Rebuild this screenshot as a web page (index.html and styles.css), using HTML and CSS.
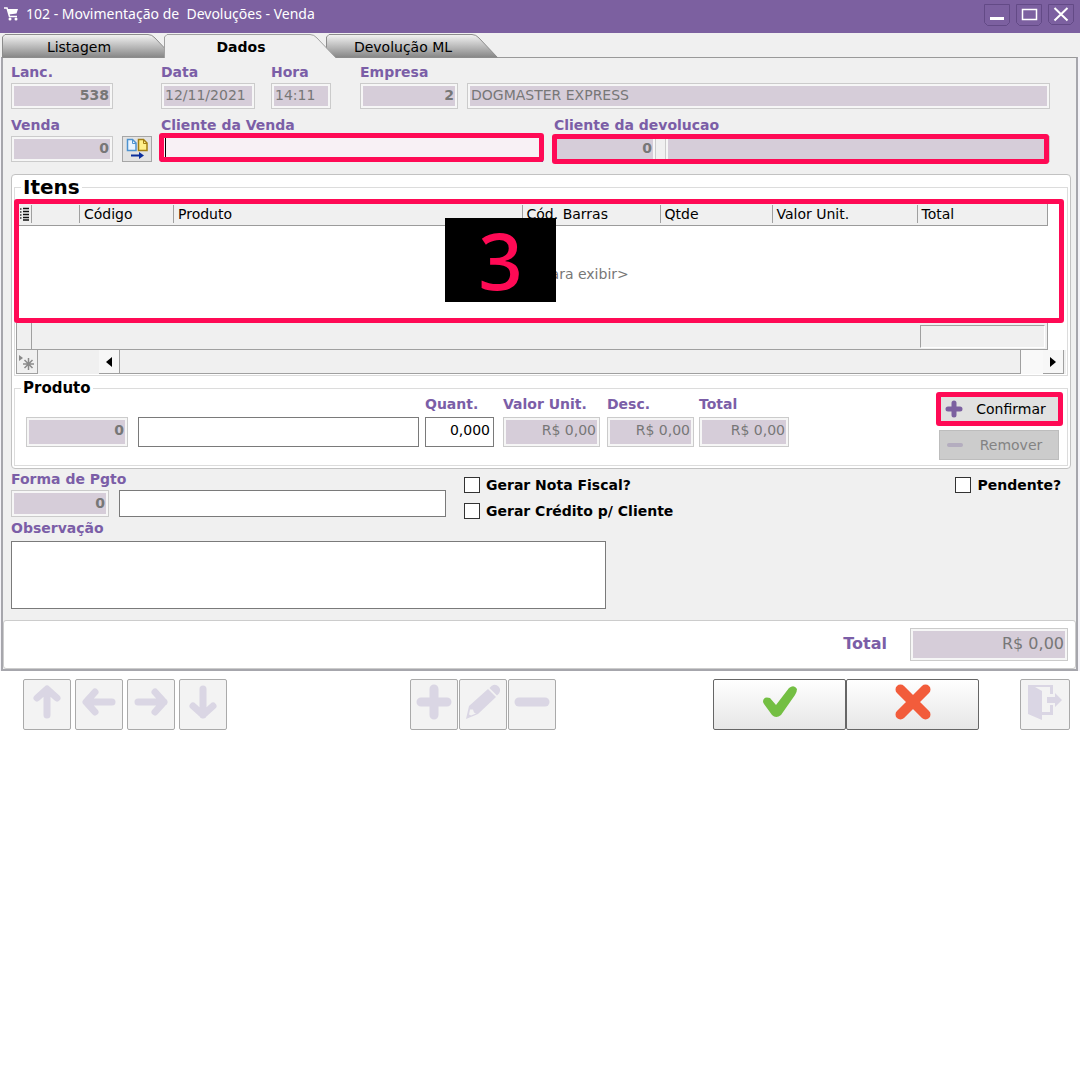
FILE: index.html
```html
<!DOCTYPE html>
<html lang="pt-BR">
<head>
<meta charset="utf-8">
<title>102 - Movimentação de Devoluções - Venda</title>
<link rel="stylesheet" href="styles.css">
</head>
<body>
<header class="titlebar">
  <svg class="cart" width="15" height="14" viewBox="0 0 15 14" aria-hidden="true"><path d="M0 1h3l2.500 8.500h7.500" fill="none" stroke="#fff" stroke-width="1.500"/><path d="M3.500 2H14l-1.500 4.500L5 7.500z" fill="#fff"/><circle cx="6" cy="12" r="1.500" fill="#fff"/><circle cx="12" cy="12" r="1.500" fill="#fff"/></svg>
  <h1 class="title">102 - Movimentação de&nbsp; Devoluções - Venda</h1>
  <div class="window-buttons">
    <button class="window-button" type="button" aria-label="Minimizar"><svg width="26" height="22" viewBox="0 0 26 22"><path d="M.5.500h25v18l-3 3h-19l-3-3z" fill="none" stroke="#634a86"/><path d="M6 14.500h14" stroke="#fff" stroke-width="3"/></svg></button>
    <button class="window-button" type="button" aria-label="Maximizar"><svg width="26" height="22" viewBox="0 0 26 22"><path d="M.5.500h25v18l-3 3h-19l-3-3z" fill="none" stroke="#634a86"/><path d="M6.500 5.500h14v10h-14z" fill="none" stroke="#fff" stroke-width="1.500"/></svg></button>
    <button class="window-button" type="button" aria-label="Fechar"><svg width="26" height="22" viewBox="0 0 26 22"><path d="M.5.500h25v17l-3 3h-19l-3-3z" fill="none" stroke="#634a86"/><path d="M6.500 4l13 12.500M19.500 4l-13 12.500" stroke="#fff" stroke-width="2"/></svg></button>
  </div>
</header>

<nav class="tabs">
  <svg width="0" height="0" class="defs" aria-hidden="true"><defs><linearGradient id="metal" x1="0" y1="0" x2="0" y2="1"><stop offset="0" stop-color="#f4f4f4"/><stop offset="1" stop-color="#868686"/></linearGradient></defs></svg>
  <button class="tab" type="button"><svg class="tab-shape" viewBox="0 0 172 24" aria-hidden="true"><path d="M.5 23.500V3L3 .5H146Q150 .5 153 4L171.500 23.500z" fill="url(#metal)" stroke="#8c8c8c"/></svg><span class="tab-text">Listagem</span></button>
  <button class="tab tab-active" type="button"><svg class="tab-shape" viewBox="0 0 172 24" aria-hidden="true"><path d="M.5 24V3L3 .5H146Q150 .5 153 4L172 24" fill="#f0f0f0" stroke="#a0a0a0"/></svg><span class="tab-text">Dados</span></button>
  <button class="tab" type="button"><svg class="tab-shape" viewBox="0 0 172 24" aria-hidden="true"><path d="M.5 23.500V3L3 .5H146Q150 .5 153 4L171.500 23.500z" fill="url(#metal)" stroke="#8c8c8c"/></svg><span class="tab-text">Devolução ML</span></button>
</nav>

<main class="window">
<form class="panel">
  <div class="fields">
    <div class="row">
      <div class="field w-code"><label for="lanc">Lanc.</label><input id="lanc" class="locked num" value="538" readonly></div>
      <div class="field w-date"><label for="data">Data</label><input id="data" class="locked" value="12/11/2021" readonly></div>
      <div class="field w-time"><label for="hora">Hora</label><input id="hora" class="locked" value="14:11" readonly></div>
      <div class="field w-company"><label for="empresa">Empresa</label><input id="empresa" class="locked num" value="2" readonly></div>
      <div class="field w-fill"><input class="locked" aria-label="Nome da empresa" value="DOGMASTER EXPRESS" readonly></div>
    </div>
    <div class="row">
      <div class="field w-code"><label for="venda">Venda</label><input id="venda" class="locked num" value="0" readonly></div>
      <button class="copy-button" type="button" aria-label="Copiar venda"><svg width="24" height="22" viewBox="0 0 24 22"><path d="M2.500 1.500h5l3.500 3.500v7.500h-8.500z" fill="#eaf5ff" stroke="#4d92cf" stroke-width="1.500"/><path d="M7.500 2v3.500h3.500" fill="none" stroke="#4d92cf"/><path d="M13.500 1.500h5l3.500 3.500v7.500h-8.500z" fill="#fff08a" stroke="#a27f13" stroke-width="1.500"/><path d="M18.500 2v3.500h3.500" fill="none" stroke="#a27f13"/><path d="M6 17.500h10" stroke="#0b2f9c" stroke-width="2"/><path d="M14 14l5 3.500-5 3.500z" fill="#0b2f9c"/></svg></button>
      <div class="field w-client"><label for="cliente">Cliente da Venda</label><div class="marked marked-client"><input id="cliente" class="focused"></div></div>
      <div class="field w-return"><label for="devolucao">Cliente da devolucao</label><div class="marked marked-return pair"><input id="devolucao" class="locked num w-code" value="0" readonly><input class="locked w-fill" aria-label="Nome do cliente da devolucao" readonly></div></div>
    </div>
  </div>

  <div class="card">
    <fieldset class="group">
      <legend class="legend-large">Itens</legend>
      <div class="marked marked-grid grid-view">
        <table class="grid">
          <colgroup><col class="c-mark"><col class="c-blank"><col class="c-code"><col><col class="c-bar"><col class="c-qty"><col class="c-unit"><col class="c-total"></colgroup>
          <thead><tr>
            <th aria-label="Colunas"><svg width="10" height="14" viewBox="0 0 10 14"><path d="M0 2h1.500M0 5h1.500M0 8h1.500M0 11h1.500" stroke="#333" stroke-width="1.500"/><path d="M3 1.500h6M3 4.500h6M3 7.500h6M3 10.500h6M3 13h6" stroke="#111" stroke-width="1.500"/></svg></th>
            <th></th><th>Código</th><th>Produto</th><th>Cód. Barras</th><th>Qtde</th><th>Valor Unit.</th><th>Total</th>
          </tr></thead>
          <tbody><tr><td class="empty" colspan="8">&lt;Sem dados para exibir&gt;</td></tr></tbody>
        </table>
        <div class="badge">3</div>
      </div>
      <div class="summary"><div class="summary-total"></div></div>
      <div class="scroller">
        <button class="filter-button" type="button" aria-label="Novo registro"><svg width="18" height="16" viewBox="0 0 18 16"><path d="M1 1l4 3-4 3z" fill="#8a8a8a"/><path d="M10.500 4v12M5 10h11M6.500 6l8 8M14.500 6l-8 8" stroke="#8a8a8a" stroke-width="1.500"/></svg></button>
        <button class="scroll-arrow push" type="button" aria-label="Rolar para a esquerda"><svg width="6" height="10" viewBox="0 0 6 10"><path d="M6 0v10L0 5z"/></svg></button>
        <div class="thumb"></div>
        <div class="track"></div>
        <button class="scroll-arrow" type="button" aria-label="Rolar para a direita"><svg width="6" height="10" viewBox="0 0 6 10"><path d="M0 0v10l6-5z"/></svg></button>
      </div>
    </fieldset>

    <fieldset class="group">
      <legend class="legend-small">Produto</legend>
      <div class="product">
        <input class="locked num tall w-code" aria-label="Código do produto" value="0" readonly>
        <input class="plain tall w-name" aria-label="Produto">
        <div class="field w-quant"><label for="quant">Quant.</label><input id="quant" class="plain tall right" value="0,000"></div>
        <div class="field w-unit"><label for="unit">Valor Unit.</label><input id="unit" class="locked tall right" value="R$ 0,00" readonly></div>
        <div class="field w-desc"><label for="desc">Desc.</label><input id="desc" class="locked tall right" value="R$ 0,00" readonly></div>
        <div class="field w-sum"><label for="sum">Total</label><input id="sum" class="locked tall right" value="R$ 0,00" readonly></div>
        <div class="actions">
          <div class="marked marked-button"><button class="action" type="button"><svg width="18" height="18" viewBox="0 0 18 18"><path d="M9 3v12M3 9h12" stroke="#7c60a0" stroke-width="5" stroke-linecap="round"/></svg><span>Confirmar</span></button></div>
          <button class="action action-off" type="button" disabled><svg width="18" height="18" viewBox="0 0 18 18"><path d="M3 9h12" stroke="#b4adbf" stroke-width="4" stroke-linecap="round"/></svg><span>Remover</span></button>
        </div>
      </div>
    </fieldset>
  </div>

  <div class="payment">
    <div class="field"><label for="forma">Forma de Pgto</label><div class="pair"><input id="forma" class="locked num w-company" value="0" readonly><input class="plain w-payment" aria-label="Nome da forma de pagamento"></div></div>
    <div class="checks">
      <label class="check"><input type="checkbox">Gerar Nota Fiscal?</label>
      <label class="check"><input type="checkbox">Gerar Crédito p/ Cliente</label>
    </div>
    <label class="check check-end"><input type="checkbox">Pendente?</label>
  </div>

  <div class="field notes"><label for="obs">Observação</label><textarea id="obs"></textarea></div>

  <div class="totals"><label for="total">Total</label><input id="total" class="locked right" value="R$ 0,00" readonly></div>
</form>
</main>

<footer class="toolbar">
  <div class="tools">
    <button class="tool" type="button" disabled aria-label="Primeiro"><svg width="36" height="36" viewBox="0 0 36 36"><path d="M18 31V6M8 14L18 5l10 9"/></svg></button>
    <button class="tool" type="button" disabled aria-label="Anterior"><svg width="36" height="36" viewBox="0 0 36 36"><path d="M31 18H6M14 8L5 18l9 10"/></svg></button>
    <button class="tool" type="button" disabled aria-label="Próximo"><svg width="36" height="36" viewBox="0 0 36 36"><path d="M5 18h26M22 8l9 10-9 10"/></svg></button>
    <button class="tool" type="button" disabled aria-label="Último"><svg width="36" height="36" viewBox="0 0 36 36"><path d="M18 5v26M8 22l10 9 10-9"/></svg></button>
  </div>
  <div class="tools tools-edit">
    <button class="tool" type="button" disabled aria-label="Incluir"><svg width="36" height="36" viewBox="0 0 36 36"><path class="thick" d="M18 5v26M5 18h26"/></svg></button>
    <button class="tool" type="button" disabled aria-label="Editar"><svg width="36" height="36" viewBox="0 0 36 36"><path class="solid" fill-rule="evenodd" d="M1 35l3-13L23 5l8 8-18 17zM5 25.500l-1 5 2 1 5-2-2-1-1-3zM24.500 4l2-2q4-2.500 7 .5t.5 7l-2 2z"/></svg></button>
    <button class="tool" type="button" disabled aria-label="Excluir"><svg width="36" height="36" viewBox="0 0 36 36"><path class="thick" d="M5 18h26"/></svg></button>
  </div>
  <div class="tools tools-save">
    <button class="tool tool-wide" type="button" aria-label="Gravar"><svg width="36" height="36" viewBox="0 0 36 36"><path d="M1 18q0-6 7-4l6 7L27 4q5-4 8 1 0 3-2 6L19 31q-5 4-9 0L2 20z" fill="#74bf43"/></svg></button>
    <button class="tool tool-wide" type="button" aria-label="Cancelar"><svg width="36" height="36" viewBox="0 0 36 36"><path d="M5.500 5.500l25 25M30.500 5.500l-25 25" stroke="#f25c3b" stroke-width="10" stroke-linecap="round"/></svg></button>
  </div>
  <button class="tool tool-exit" type="button" disabled aria-label="Sair"><svg width="36" height="36" viewBox="0 0 36 36"><path class="solid" d="M1 1h25v9h-3V3H8l7 4v21h8v-7h3v10H15v5L1 30zM20 13h8V9l7 7-7 7v-4h-8z"/></svg></button>
</footer>
</body>
</html>
```
FILE: styles.css
```css
* { box-sizing: border-box; }

body {
  margin: 0;
  background: #fff;
  color: #000;
  font: 14px/16px "DejaVu Sans", Verdana, sans-serif;
}

button, input, textarea {
  margin: 0;
  padding: 0;
  border: 0;
  border-radius: 0;
  color: inherit;
  font: inherit;
}

svg { display: block; flex: none; }
.defs { position: absolute; }

/* Title bar */
.titlebar {
  display: flex;
  align-items: flex-start;
  height: 33px;
  padding: 4px 6px 0 4px;
  background: #7c60a0;
  color: #fff;
}
.cart { margin-top: 3px; }
.title {
  flex: 1;
  margin: 0 0 0 7px;
  font: 14px/20px "Noto Sans", "Open Sans", sans-serif;
}
.window-buttons { display: flex; gap: 6px; }
.window-button { background: none; }

/* Tabs */
.tabs {
  display: flex;
  height: 25px;
  padding: 1px 0 0 2px;
  background: #f0f0f0;
}
.tab {
  position: relative;
  width: 172px;
  height: 24px;
  padding-top: 1px;
  background: none;
}
.tab + .tab { margin-left: -10px; }
.tab-active { z-index: 1; font-weight: bold; }
.tab-shape { position: absolute; inset: 0; width: 100%; height: 100%; }
.tab-text { position: relative; padding-right: 18px; }

/* Panel */
.window { padding: 0 2px 0 1px; background: #f4f3f8; }
.panel {
  margin-top: -1px;
  border: 2px solid #a6a6ac;
  border-top: 1px solid #999;
  background: #f0f0f0;
}
.fields { padding: 6px 26px 0 8px; }
.row { display: flex; align-items: flex-end; margin-bottom: 8px; }
.field { display: flex; flex-direction: column; gap: 3px; }
.field > label, .totals label { color: #7b5ea7; font-weight: bold; white-space: nowrap; }
.pair { display: flex; }

.locked, .plain, .focused { height: 26px; min-width: 0; width: 100%; }
.locked {
  padding: 0 3px 2px;
  border: 1px solid #cbcbcb;
  background: #d6cdd9;
  box-shadow: inset 0 0 0 2px #f6f6f6;
  color: #777;
}
.num { padding: 0 3px 2px; text-align: right; font-weight: bold; }
.right { text-align: right; }
.plain { padding: 0 3px; border: 1px solid #7a7a7a; background: #fff; }
.focused { padding-left: 4px; border: 1px solid #0a64c8; background: #f8f1f5; box-shadow: inset 3px 0 0 #f8f1f5, inset 4px 0 0 #000; }
.tall { height: 30px; padding-bottom: 5px; }

.w-code { flex: none; width: 102px; }
.w-date { width: 94px; margin-left: 48px; }
.w-time { width: 60px; margin-left: 16px; }
.w-company { flex: none; width: 98px; }
.field.w-company { margin-left: 29px; }
.w-fill { flex: 1; margin-left: 9px; }
.w-client { flex: 382 1 0; margin-left: 9px; }
.w-return { flex: 496 1 0; margin-left: 11px; min-width: 0; }

.copy-button {
  display: flex;
  justify-content: center;
  width: 30px;
  height: 26px;
  margin-left: 9px;
  padding-top: 1px;
  border: 1px solid #a6a6a6;
  background: #e3e3e3;
}

/* Highlight frames */
.marked { position: relative; }
.marked::after {
  content: "";
  position: absolute;
  inset: -2px;
  border: 5px solid #ff0a55;
  border-radius: 3px;
  pointer-events: none;
}
.marked-client::after { inset: -3px -1px 0 -2px; }
.marked-return::after { inset: -2px 1px -2px -2px; }
.marked-grid::after { inset: 0 2px 0 -2px; }
.marked-button::after { inset: -3px -4px -3px -3px; }

/* Items card */
.card {
  margin: 12px 5px 0 8px;
  padding: 0 2px 2px;
  border: 1px solid #c2c2c2;
  border-radius: 4px;
  background: #fff;
}
.group {
  min-width: 0;
  margin: 0;
  padding: 0 1px 1px;
  border: 1px solid #dcdcdc;
}
.group legend { margin-left: 5px; padding: 0 2px; font-weight: bold; }
.legend-large { font-size: 20px; line-height: 24px; }
.legend-small { font-size: 15px; line-height: 24px; }

.grid-view { padding: 4px 18px 0 1px; }
.grid { width: 100%; border-collapse: collapse; table-layout: fixed; }
.grid th {
  height: 22px;
  padding: 0 4px;
  border-bottom: 1px solid #9b9b9b;
  background: linear-gradient(#a0a0a0, #a0a0a0) right 2px / 1px 18px no-repeat #f0f0f0;
  font-weight: normal;
  text-align: left;
  white-space: nowrap;
}
.grid th:first-child { padding: 0 3px; }
.grid th:last-child { border-right: 1px solid #9b9b9b; background: #f0f0f0; }
.c-mark { width: 15px; }
.c-blank { width: 48px; }
.c-code { width: 94px; }
.c-bar { width: 138px; }
.c-qty { width: 112px; }
.c-unit { width: 145px; }
.c-total { width: 130px; }
.grid .empty { height: 98px; padding: 0 0 0 12px; text-align: center; color: #777; }
.badge {
  position: absolute;
  top: 19px;
  left: 429px;
  width: 111px;
  height: 84px;
  background: #000;
  color: #ff0a55;
  font: 500 78px/84px "Noto Sans", "Open Sans", sans-serif;
  text-align: center;
}

.summary {
  display: flex;
  justify-content: flex-end;
  height: 27px;
  margin: 0 18px 0 0;
  padding: 2px 2px 1px 0;
  border: 1px solid #a0a0a0;
  border-top: 0;
  background: linear-gradient(#a0a0a0, #a0a0a0) 14px 0 / 1px 100% no-repeat #f0f0f0;
}
.summary-total { width: 125px; border: 1px solid #a0a0a0; border-right-color: #fff; border-bottom-color: #fff; }

.scroller { display: flex; height: 24px; background: #f0f0f0; }
.filter-button {
  display: flex;
  align-items: center;
  justify-content: center;
  width: 22px;
  border: 1px solid #a0a0a0;
  border-top: 0;
  background: #f0f0f0;
}
.scroll-arrow {
  display: flex;
  align-items: center;
  justify-content: center;
  width: 21px;
  border: 1px solid #a0a0a0;
  border-width: 0 1px 1px 0;
  background: #f7f7f7;
}
.push { margin-left: 61px; }
.thumb { flex: 1; border: 1px solid #a0a0a0; border-width: 0 1px 1px 0; }
.track { width: 22px; background: #f9f9f9; }
.scroller > :last-child { margin-right: 2px; }

/* Product entry */
.product { display: flex; align-items: flex-end; margin-top: -5px; padding: 0 7px 4px 10px; }
.product > input, .product > .field { margin-bottom: 13px; }
.product .field { gap: 5px; }
.w-name { flex: 0 1 281px; margin-left: 10px; }
.w-quant { width: 69px; margin-left: 6px; }
.w-unit { width: 97px; margin-left: 9px; }
.w-desc { width: 87px; margin-left: 7px; }
.w-sum { width: 90px; margin-left: 5px; }
.actions { display: flex; flex-direction: column; gap: 7px; width: 120px; margin-left: auto; }
.action {
  display: flex;
  align-items: center;
  width: 100%;
  height: 28px;
  padding-left: 6px;
  background: #e1e1e1;
}
.action span { flex: 1; text-align: center; }
.action-off { height: 30px; border: 1px solid #bdbdbd; background: #ccc; color: #838383; }

/* Payment and notes */
.payment { display: flex; align-items: flex-start; padding: 2px 15px 0 8px; }
.w-payment { width: 327px; margin-left: 10px; }
.payment .plain, .payment .locked { height: 27px; }
.checks { display: flex; flex-direction: column; gap: 10px; padding: 6px 0 0 18px; }
.check { display: flex; align-items: center; gap: 6px; font-weight: bold; white-space: nowrap; }
.check input {
  appearance: none;
  width: 16px;
  height: 16px;
  border: 1px solid #333;
  background: #fff;
}
.check-end { margin: 6px 0 0 auto; }
.notes { padding: 1px 8px 11px; gap: 5px; }
.notes textarea {
  width: 595px;
  max-width: 100%;
  height: 68px;
  border: 1px solid #7a7a7a;
  background: #fff;
  resize: none;
}

/* Grand total */
.totals {
  display: flex;
  align-items: center;
  justify-content: flex-end;
  gap: 23px;
  height: 49px;
  padding-right: 7px;
  border: 1px solid #ccc;
  border-radius: 3px;
  background: #fff;
  font-size: 16px;
}
.totals label { padding-bottom: 2px; }
.totals .locked { width: 158px; height: 33px; padding-bottom: 3px; }

/* Toolbar */
.toolbar { display: flex; padding: 8px 10px 8px 23px; }
.tools { display: flex; gap: 4px; }
.tools-edit { gap: 1px; margin-left: 183px; }
.tools-save { gap: 0; margin-left: auto; }
.tool {
  display: flex;
  justify-content: center;
  width: 48px;
  height: 51px;
  padding-top: 4px;
  border: 1px solid #aaa;
  border-radius: 2px;
  background: #f3f3f3;
}
.tool:disabled path { fill: none; stroke: #dad6e4; stroke-width: 7; stroke-linecap: round; stroke-linejoin: round; }
.tool:disabled path.thick { stroke-width: 9; }
.tool:disabled path.solid { fill: #dad6e4; stroke: none; }
.tool-wide { width: 133px; border-color: #666; background: linear-gradient(#fff, #e6e6e6); }
.tool-exit { width: 50px; margin-left: 41px; }
```
